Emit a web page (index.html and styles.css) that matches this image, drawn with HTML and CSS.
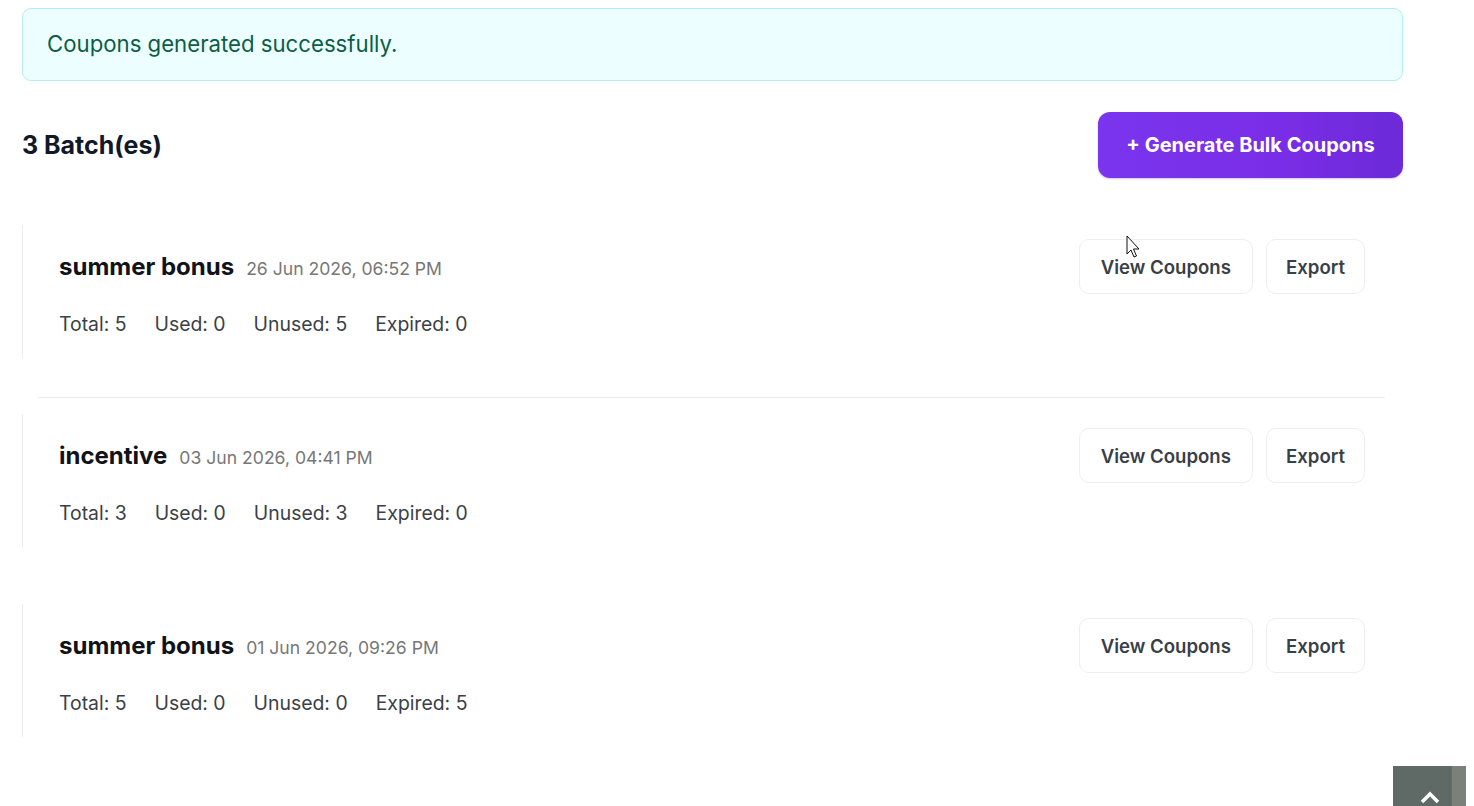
FILE: index.html
```html
<!DOCTYPE html>
<html lang="en">
<head>
<meta charset="utf-8">
<title>Coupon Batches</title>
<link rel="stylesheet" href="styles.css">
</head>
<body>
<main class="page">
  <div class="alert">Coupons generated successfully.</div>

  <div class="header">
    <h2 class="count">3 Batch(es)</h2>
    <button class="primary">+ Generate Bulk Coupons</button>
  </div>

  <div class="batches">
    <section class="card">
      <div class="card-top">
        <div class="card-title"><span class="name">summer bonus</span><span class="date">26 Jun 2026, 06:52 PM</span></div>
        <div class="actions"><button class="ghost">View Coupons</button><button class="ghost ghost-sm">Export</button></div>
      </div>
      <div class="stats"><span>Total: 5</span><span>Used: 0</span><span>Unused: 5</span><span>Expired: 0</span></div>
    </section>
    <div class="sep"></div>
    <section class="card card-b">
      <div class="card-top">
        <div class="card-title"><span class="name">incentive</span><span class="date">03 Jun 2026, 04:41 PM</span></div>
        <div class="actions"><button class="ghost">View Coupons</button><button class="ghost ghost-sm">Export</button></div>
      </div>
      <div class="stats"><span>Total: 3</span><span>Used: 0</span><span>Unused: 3</span><span>Expired: 0</span></div>
    </section>
    <section class="card card-c">
      <div class="card-top">
        <div class="card-title"><span class="name">summer bonus</span><span class="date">01 Jun 2026, 09:26 PM</span></div>
        <div class="actions"><button class="ghost">View Coupons</button><button class="ghost ghost-sm">Export</button></div>
      </div>
      <div class="stats"><span>Total: 5</span><span>Used: 0</span><span>Unused: 0</span><span>Expired: 5</span></div>
    </section>
  </div>
</main>

<svg class="cursor" width="14" height="26" viewBox="0 0 14 26"><path d="M1 1 L1 19 L5 15 L8 22 L10.5 21 L7.5 14 L13 14 Z" fill="#fff" stroke="#111" stroke-width="1"/></svg>

<button class="to-top" aria-label="Back to top">
  <svg width="24" height="16" viewBox="0 0 24 16"><path d="M4 14 L12 6 L20 14" fill="none" stroke="#fff" stroke-width="3.5"/></svg>
</button>
</body>
</html>
```

FILE: styles.css
```css
* { box-sizing: border-box; }
html, body { margin: 0; padding: 0; background: #fff; }
body {
  font-family: Inter, "Open Sans", "Liberation Sans", sans-serif;
  color: #111827;
  overflow: hidden;
  height: 806px;
}
.page {
  padding: 8px 71px 0 22px;
}
.alert {
  height: 73px;
  border: 1px solid #b4eef0;
  background: #ecfeff;
  border-radius: 9px;
  padding: 0 24px 2px;
  display: flex;
  align-items: center;
  color: #0b5e45;
  font-size: 22.2px;
}
.header {
  margin-top: 31px;
  display: flex;
  justify-content: space-between;
  align-items: center;
}
.count {
  margin: 0;
  font-size: 25px;
  font-weight: 700;
  color: #111827;
}
button { font-family: inherit; cursor: pointer; }
.primary {
  height: 66px;
  width: 305px;
  border: none;
  border-radius: 12px;
  background: linear-gradient(90deg, #7a35ee 0%, #7a2de6 60%, #6c2ad8 100%);
  color: #fff;
  font-size: 20px;
  font-weight: 700;
  box-shadow: 0 1px 2px rgba(80, 30, 160, 0.25);
}
.batches {
  margin-top: 47px;
}
.card {
  border-left: 1px solid #ececec;
  padding: 14px 38px 20px 36px;
}
.card-top {
  display: flex;
  justify-content: space-between;
  align-items: center;
}
.card-title {
  display: flex;
  align-items: baseline;
  gap: 12px;
}
.name {
  font-size: 24px;
  font-weight: 700;
  color: #111318;
}
.date {
  font-size: 17.6px;
  color: #777777;
}
.actions {
  display: flex;
  gap: 13px;
}
.ghost {
  height: 55px;
  padding: 0 21px;
  background: #fff;
  border: 1px solid #eeeeee;
  border-radius: 10px;
  font-size: 18.6px;
  font-weight: 600;
  color: #3a3f47;
}
.ghost-sm {
  padding: 0 19px;
}
.stats {
  margin-top: 17px;
  display: flex;
  gap: 28px;
  font-size: 19.4px;
  line-height: 27px;
  color: #3b3f46;
}
.sep {
  height: 1px;
  background: #ececec;
  margin: 39px 18px 16px 16px;
}
.card-c { margin-top: 57px; }
.cursor {
  position: absolute;
  left: 1126px;
  top: 235px;
}
.to-top {
  position: absolute;
  left: 1393px;
  top: 766px;
  width: 73px;
  height: 60px;
  border: none;
  padding: 22px 0 0;
  background: linear-gradient(90deg, #5f6a66 0%, #5f6a66 80%, #7a807a 81%, #7a807a 100%);
  display: flex;
  justify-content: center;
  align-items: flex-start;
}
```
